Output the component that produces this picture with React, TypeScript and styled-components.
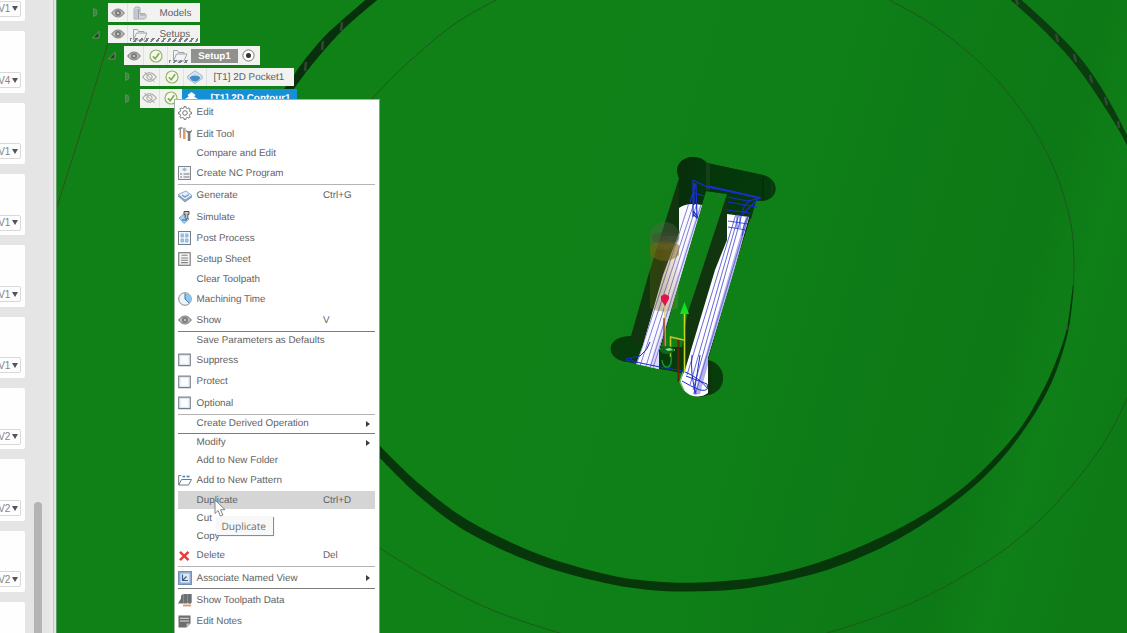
import React from 'react';
import styled, { createGlobalStyle } from 'styled-components';

const Global = createGlobalStyle`
  * { box-sizing: border-box; }
  body { margin: 0; overflow: hidden; font-family: "Liberation Sans", Arial, sans-serif; text-rendering: geometricPrecision; }
`;

const Screen = styled.div`
  display: flex;
  width: 1127px;
  height: 633px;
  overflow: hidden;
`;

/* ---------- left panel ---------- */
const Panel = styled.aside`
  position: relative;
  flex: 0 0 57px;
  height: 100%;
  overflow: hidden;
  background: linear-gradient(90deg, #e5e5e5 49px, #e8e9e8 50px, #e8e9e8 53px, #bfc5c2 53px, #c9cecb 54px, #e4e8e5 54px, #dfe6df 56px, #5c9c60 56px);
`;

const CardList = styled.div`
  display: flex;
  flex-direction: column;
  gap: 10px;
  width: 25px;
  margin-top: -40.2px;
`;

const Card = styled.div`
  display: flex;
  flex: 0 0 61.35px;
  justify-content: flex-end;
  align-items: flex-end;
  padding: 0 4px 4.5px 0;
  background: #fefefe;
  border-radius: 0 2px 2px 0;
`;

const VersionButton = styled.button`
  display: flex;
  flex: 0 0 auto;
  align-items: center;
  justify-content: flex-end;
  gap: 2px;
  width: 40px;
  height: 16px;
  padding: 0 2px 0 0;
  border: 1px solid #d9d9d9;
  border-radius: 2px;
  background: #fdfdfd;
  color: #858585;
  font: 10px "Liberation Sans", Arial, sans-serif;
  letter-spacing: -0.2px;
`;

const Caret = styled.i`
  border: 3px solid transparent;
  border-top: 5px solid #555;
  border-bottom: 0;
`;

const ScrollThumb = styled.div`
  position: absolute;
  left: 34px;
  top: 502px;
  width: 8px;
  height: 150px;
  border-radius: 4px;
  background: #b4b4b4;
`;

/* ---------- viewport ---------- */
const Viewport = styled.main`
  position: relative;
  flex: 1;
  height: 100%;
  overflow: hidden;
  background: #108117;
`;

const Canvas = styled.svg`
  display: block;
  width: 1070px;
  height: 633px;
`;

const Tree = styled.div`
  position: absolute;
  left: 0;
  top: -18.3px;
  display: flex;
  flex-direction: column;
  gap: 2.8px;
`;

const TreeRow = styled.div<{ $indent: number }>`
  display: flex;
  align-items: center;
  height: 18.7px;
  padding-left: ${p => p.$indent}px;
`;

const Expander = styled.div`
  flex: 0 0 17px;
  height: 11px;
  display: flex;
`;

const TreeItem = styled.div<{ $width: number }>`
  position: relative;
  display: flex;
  align-items: center;
  width: ${p => p.$width}px;
  height: 100%;
  background: #f2f3f1;
  color: #606060;
  font-size: 9.9px;
`;

const IconCell = styled.span<{ $w: number; $line?: boolean }>`
  display: flex;
  flex: 0 0 ${p => p.$w}px;
  height: 100%;
  align-items: center;
  justify-content: center;
  border-right: ${p => (p.$line ? '1px solid #dfe2dd' : '0')};
`;

const TreeLabel = styled.span<{ $pad?: number }>`
  padding: 1.4px 0 0 ${p => p.$pad ?? 0}px;
  white-space: nowrap;
`;

const ActiveLabel = styled.span`
  height: 14px;
  width: 47px;
  line-height: 15px;
  text-align: center;
  color: #fff;
  font-weight: bold;
  font-size: 9.7px;
  background: #8f918f;
`;

const SelectedLabel = styled.span`
  display: flex;
  align-items: center;
  flex: 1;
  height: 100%;
  gap: 12.5px;
  padding-left: 3px;
  background: #1590d6;
  color: #fff;
  font-weight: bold;
  white-space: nowrap;
`;

const Hatch = styled.i<{ $left: number; $width: number }>`
  position: absolute;
  left: ${p => p.$left}px;
  bottom: 1.5px;
  width: ${p => p.$width}px;
  height: 3.5px;
  background: repeating-linear-gradient(125deg, #7d8288 0 2px, transparent 2px 4.6px);
`;

/* ---------- context menu ---------- */
const Menu = styled.div`
  position: absolute;
  left: 117px;
  top: 99px;
  width: 206px;
  height: 560px;
  padding: 2px 4px 2px 3px;
  border: 1px solid #a3b3a3;
  border-right: 1.5px solid #8c9a8c;
  background: #fff;
`;

const MenuItem = styled.div<{ $tall?: boolean; $active?: boolean }>`
  display: grid;
  grid-template-columns: 18.6px 126.4px 1fr 9px;
  align-items: center;
  height: ${p => (p.$tall ? 21.3 : 18)}px;
  background: ${p => (p.$active ? '#d5d5d5' : 'transparent')};
  color: #636363;
  font-size: 9.85px;
  line-height: 13px;
  white-space: nowrap;
`;

const MenuIcon = styled.span`
  display: flex;
  align-items: center;
  width: 14px;
  height: 14px;
`;

const ItemText = styled.span`
  padding-top: 0.6px;
`;

const Separator = styled.div<{ $dark?: boolean }>`
  height: 1px;
  background: ${p => (p.$dark ? '#7c7c7c' : '#b4b4b4')};
`;

const SubmenuArrow = styled.i`
  border: 3.5px solid transparent;
  border-left: 4.5px solid #3c3c3c;
  border-right: 0;
  width: 0;
`;

const Tooltip = styled.div`
  position: absolute;
  left: 160px;
  top: 517px;
  width: 57px;
  height: 19px;
  padding-left: 4.5px;
  line-height: 18px;
  background: #f8f8f8;
  border: solid #8c8c8c;
  border-width: 0 1.5px 1.5px 0;
  box-shadow: 0 0 1px #ccc;
  color: #6d6d6d;
  font-family: "Open Sans", sans-serif;
  font-size: 10.2px;
  letter-spacing: -0.05px;
  white-space: nowrap;
`;

const Pointer = styled.svg`
  position: absolute;
  left: 157px;
  top: 499px;
`;

/* ---------- icons ---------- */
const Svg = ({ w = 14, h = 14, children }: { w?: number; h?: number; children: React.ReactNode }) => (
  <svg width={w} height={h} viewBox={`0 0 ${w} ${h}`} fill="none">{children}</svg>
);

const Eye = () => (
  <Svg w={14} h={10}>
    <path d="M.7 5Q7-3 13.3 5 7 13 .7 5Z" fill="#b9bab9" stroke="#868886" strokeWidth="1.2" />
    <circle cx="7" cy="5" r="3" fill="#7c7e7c" /><circle cx="7" cy="5" r="1.1" fill="#d8d8d8" />
  </Svg>
);
const EyeOff = () => (
  <Svg w={15} h={12}>
    <path d="M.7 6Q7.5-2.4 14.3 6 7.5 14.4.7 6Z" stroke="#a3a5a3" strokeWidth="1.1" />
    <circle cx="7.5" cy="6" r="2.7" stroke="#a3a5a3" /><path d="M2.5 1l10 10" stroke="#a3a5a3" />
  </Svg>
);
const Check = () => (
  <Svg w={14} h={14}>
    <circle cx="7" cy="7" r="6" stroke="#94b568" strokeWidth="1.2" fill="#f4f8ee" />
    <path d="M3.9 7.3l2.3 2.5 4-5.6" stroke="#7fa84b" strokeWidth="1.5" />
  </Svg>
);
const Boxes = () => (
  <Svg w={14} h={14}>
    <path d="M1 3L2.5 1H6L7 2V7.5H12L13 8.5V11.5L11.5 13H1Z" fill="#d4d8de" stroke="#a0a5ab" strokeWidth=".9" />
    <path d="M5.5 3V12.5H1.5V3Z" fill="#c3c8d0" /><path d="M5.5 3V12.5M7 9H12" stroke="#8e9399" strokeWidth=".8" />
  </Svg>
);
const Folder = () => (
  <Svg w={16} h={13}>
    <path d="M1.5 12V1.5h4l1 2H12V5M1.5 12L4.5 5H15l-3 7Z" stroke="#a2a5a8" fill="#f1f3f4" />
  </Svg>
);
const Pocket = () => (
  <Svg w={16} h={14}>
    <path d="M8 .7L15.2 6v2.5L8 13.5.8 8.5V6Z" fill="#d5e5f1" stroke="#91a6b5" strokeWidth=".8" />
    <path d="M2.5 7.5Q8 3 13.5 7.5 11.5 11.5 8 11.5T2.5 7.5Z" fill="#3e8fca" /><path d="M5 5.5Q8 2.500 11 5.500Z" fill="#c6dcea" />
  </Svg>
);
const Contour = () => (
  <Svg w={13} h={14}>
    <path d="M6.5 1l4 3-1.3 1.5L13 8l-6.5 5L0 8l3.8-2.5L2.5 4Z" fill="#fff" />
  </Svg>
);

const Gear = () => (
  <Svg>
    <path
      d="M12 5.9L13.5 6.2V7.8L12 8.1 11.4 9.7 12.2 11 11 12.2 9.7 11.4 8.1 12 7.8 13.5H6.2L5.9 12 4.3 11.4 3 12.2 1.8 11 2.6 9.7 2 8.1.5 7.8V6.2L2 5.9 2.6 4.3 1.8 3 3 1.8 4.3 2.6 5.9 2 6.2.5H7.8L8.1 2 9.7 2.6 11 1.8 12.2 3 11.4 4.3Z"
      stroke="#777" strokeWidth="1" strokeLinejoin="round"
    />
    <circle cx="7" cy="7" r="2.3" stroke="#777" strokeWidth="1" />
  </Svg>
);
const Tools = () => (
  <Svg>
    <path d="M0 2.5L2 1h2.5M2.3 1.5v6" stroke="#888" strokeWidth="1.3" /><path d="M2.3 6v5" stroke="#e08070" strokeWidth="1.4" />
    <path d="M5 5h2.6v7H5Z" fill="#dfa35e" /><path d="M5 .8h2.6v4.2H5Z" fill="#a9a9a9" />
    <path d="M8 2.5q0 3 1.8 3.5V14h2.6V6Q14 5.5 14 2.5L12.5 4h-3Z" fill="#7a7a7a" />
  </Svg>
);
const NcProgram = () => (
  <Svg>
    <rect x=".5" y=".5" width="12" height="13" fill="#f1f4f8" stroke="#81858c" />
    <path d="M6.5 1.5l2.5 2-2.5 2-2.5-2Z" fill="#9abbe0" /><path d="M2 8h2M5.5 8h6M2 11h2M5.5 11h6" stroke="#777" />
  </Svg>
);
const Generate = () => (
  <Svg>
    <path d="M0 7l8-4 6 5-7 5Z" fill="#8fa9c9" stroke="#75899f" strokeWidth=".7" />
    <path d="M0 5.5L8 2l6 4.5-7 4.5Z" fill="#e6eff8" stroke="#7d99b8" strokeWidth=".8" />
    <path d="M4 6l3 2 4-2.5" stroke="#6796c8" strokeWidth="1.2" />
  </Svg>
);
const Simulate = () => (
  <Svg>
    <path d="M1 8l5-4 5 5-5 4.5Z" fill="#a9d0f3" stroke="#6796bd" strokeWidth=".8" />
    <path d="M6 1.5h5v3H9.8v3L8.5 9.5 7.2 7.5v-3H6Z" fill="#c4c4c4" stroke="#4e5257" /><path d="M4 10h5" stroke="#3c83c0" strokeWidth="1.4" />
  </Svg>
);
const PostProcess = () => (
  <Svg>
    <rect x=".5" y=".5" width="12" height="13" fill="#f0f5fa" stroke="#777d84" />
    <path d="M3 3h2.5v3H3ZM7.5 3H10v3H7.5ZM3 8h2.5v3H3ZM7.5 8H10v3H7.5Z" fill="#9fc8ee" stroke="#7fb2e0" strokeWidth=".8" />
  </Svg>
);
const SetupSheet = () => (
  <Svg>
    <rect x=".7" y=".7" width="11.5" height="12.6" fill="#f3f3f3" stroke="#808080" strokeWidth="1.2" />
    <path d="M3.5 3.3h6M3 6h7M3 8.3h7M3 10.6h7" stroke="#848484" strokeWidth="1.1" />
  </Svg>
);
const Clock = () => (
  <Svg>
    <circle cx="7" cy="7" r="6.3" fill="#eef3f7" stroke="#868b90" /><path d="M7 1a6 6 0 0 1 4.2 10.2L7 7Z" fill="#8bc5f0" />
    <path d="M7 1.5V7l4 4" stroke="#4a7598" />
  </Svg>
);
const CheckBox = () => (
  <Svg>
    <rect x=".8" y="1.2" width="11.4" height="11.4" fill="#fbfcfd" stroke="#76808d" strokeWidth="1.3" /><rect x="2" y="2.4" width="9" height="9" stroke="#dfe5ec" />
  </Svg>
);
const Pattern = () => (
  <Svg>
    <path d="M.7 12V2.500h2.500M.7 12L3.500 6.500h10L10.500 12Z" stroke="#717b85" /><path d="M4.500 3.500h2.500M8.500 3.500h3" stroke="#417eb8" strokeWidth="1.600" />
  </Svg>
);
const Cross = () => (
  <Svg><path d="M2 2.8l8.500 8.400M10.500 2.800L2 11.200" stroke="#ea3a3c" strokeWidth="2.500" /></Svg>
);
const NamedView = () => (
  <Svg>
    <rect x=".5" y=".5" width="13" height="13" fill="#8eacd0" stroke="#7291b8" /><rect x="2.5" y="2.5" width="9" height="9" fill="#dfe9f4" />
    <path d="M4.5 3.5v6H10M4.5 9.5l4-4" stroke="#405f84" strokeWidth="1.2" />
  </Svg>
);
const ToolpathData = () => (
  <Svg>
    <path d="M0 10.500l3-5v5ZM3 2.500l2.300-1.500v9.500H3ZM5.500 1h4v9.500h-4ZM9.700 1h4v8.500L12 11 9.700 10Z" fill="#6d7073" /><path d="M5 12.500h8" stroke="#d99a68" strokeWidth="1.800" />
  </Svg>
);
const Notes = () => (
  <Svg>
    <path d="M.5 1.5h12v8l-4 4h-8Z" fill="#6b6d6f" /><path d="M2 4.3h9M2 7h9" stroke="#e4e4e4" strokeWidth="1.1" /><path d="M8.5 13.5v-4h4Z" fill="#b9bbbd" />
  </Svg>
);

type Entry =
  | { sep: 'light' | 'dark' }
  | { label: string; icon?: () => React.ReactElement; keys?: string; sub?: boolean; active?: boolean };

const entries: Entry[] = [
  { label: 'Edit', icon: Gear },
  { label: 'Edit Tool', icon: Tools },
  { label: 'Compare and Edit' },
  { label: 'Create NC Program', icon: NcProgram },
  { sep: 'light' },
  { label: 'Generate', icon: Generate, keys: 'Ctrl+G' },
  { label: 'Simulate', icon: Simulate },
  { label: 'Post Process', icon: PostProcess },
  { label: 'Setup Sheet', icon: SetupSheet },
  { label: 'Clear Toolpath' },
  { label: 'Machining Time', icon: Clock },
  { label: 'Show', icon: Eye, keys: 'V' },
  { sep: 'dark' },
  { label: 'Save Parameters as Defaults' },
  { label: 'Suppress', icon: CheckBox },
  { label: 'Protect', icon: CheckBox },
  { label: 'Optional', icon: CheckBox },
  { sep: 'light' },
  { label: 'Create Derived Operation', sub: true },
  { sep: 'dark' },
  { label: 'Modify', sub: true },
  { label: 'Add to New Folder' },
  { label: 'Add to New Pattern', icon: Pattern },
  { label: 'Duplicate', keys: 'Ctrl+D', active: true },
  { label: 'Cut' },
  { label: 'Copy' },
  { label: 'Delete', icon: Cross, keys: 'Del' },
  { sep: 'light' },
  { label: 'Associate Named View', icon: NamedView, sub: true },
  { sep: 'dark' },
  { label: 'Show Toolpath Data', icon: ToolpathData },
  { label: 'Edit Notes', icon: Notes },
];

/* ---------- 3D scene ---------- */
type Pt = [number, number];

// Catmull-Rom spline through the points, as cubic segments.
const curve = (p: Pt[], start = 'M') => {
  let d = `${start}${p[0][0]} ${p[0][1]}`;
  for (let i = 0; i < p.length - 1; i++) {
    const a = p[i - 1] ?? p[i], b = p[i], c = p[i + 1], e = p[i + 2] ?? c;
    d += `C${b[0] + (c[0] - a[0]) / 6} ${b[1] + (c[1] - a[1]) / 6} ${c[0] - (e[0] - b[0]) / 6} ${c[1] - (e[1] - b[1]) / 6} ${c[0]} ${c[1]}`;
  }
  return d;
};
const band = (outer: Pt[], inner: Pt[]) => curve(outer) + curve([...inner].reverse(), 'L') + 'Z';

const grooveBottom = band(
  [[1073.5, 285], [1072.5, 300], [1068.5, 330], [1059.5, 362], [1048, 390], [1030, 421], [1004, 456], [973, 487], [933, 517.5], [887, 545], [833, 568], [780, 582], [735, 589.5], [690, 591.5], [650, 590], [603, 582.5], [537, 564], [470, 533.5], [420, 497], [372, 450]],
  [[1073, 285], [1071, 300], [1066.5, 330], [1056.5, 360], [1043, 390], [1019, 430], [984, 469], [950, 497.5], [900, 528], [833, 557.5], [767, 576], [700, 582.5], [650, 581], [603, 573.5], [537, 553.5], [470, 521.5], [420, 484.5], [372, 438]],
);
const grooveLeft = band(
  [[370, -4], [340, 22], [323, 38], [303, 62], [292, 78], [282, 92]],
  [[382, -4], [348, 25], [327, 47], [307, 71], [296, 86], [288, 98]],
);
const grooveRight = band(
  [[1017, -4], [1050, 26], [1077, 54], [1097, 81], [1113, 108], [1130, 141]],
  [[1006, -4], [1033, 20], [1060, 47], [1080, 71], [1100, 100], [1117, 127], [1130, 151]],
);
const thinInner = curve([[362, 111], [372, 99], [399, 71], [440, 35], [467, 16], [500, -2]]);
const thinRight = curve([[886, -2], [933, 25], [977, 60], [1008, 93], [1033, 128], [1053, 166], [1067, 207], [1073, 240], [1073.8, 277], [1072, 300]]);
const thinOuterLeft = curve([[372, 543], [420, 573], [470, 600], [513, 618], [566, 635]]);
const thinOuterRight = curve([[824, 634], [877, 617], [933, 593], [983, 564], [1017, 540], [1050, 510], [1083, 472], [1107, 438], [1128, 397]]);

const Scene = () => (
  <Canvas viewBox="57 0 1070 633">
    <defs>
      <linearGradient id="ground" gradientUnits="userSpaceOnUse" x1="540" y1="250" x2="1127" y2="420">
        <stop offset="0" stopColor="#108117" /><stop offset=".35" stopColor="#0f8018" /><stop offset=".55" stopColor="#0d7b17" /><stop offset=".78" stopColor="#0d7916" /><stop offset=".87" stopColor="#0f7f18" /><stop offset="1" stopColor="#0d7a16" />
      </linearGradient>
      <linearGradient id="capShade" x1="0" x2="1"><stop offset="0" stopColor="#082d0a" /><stop offset=".3" stopColor="#04360a" /><stop offset="1" stopColor="#053a0c" /></linearGradient>
      <linearGradient id="tool" x1="0" x2="1"><stop offset="0" stopColor="#5f6a10" stopOpacity=".55" /><stop offset=".4" stopColor="#674a10" stopOpacity=".65" /><stop offset="1" stopColor="#c7a060" stopOpacity=".3" /></linearGradient>
      <clipPath id="leftFloor"><path d="M679 208Q687 202 702 205L682 272 659 350V369L636 364 643 345 663 275 679 233Z" /></clipPath>
      <clipPath id="rightFloor"><path d="M727 214L749 217 734 270 708 357V393Q700 399 690 395 680 390 681 379L685 370 715 270 727 240Z" /></clipPath>
    </defs>
    <rect x="57" width="1070" height="633" fill="url(#ground)" />

    <g fill="none" stroke="#23541f" strokeWidth="1">
      <path d="M108 43L90 103 56 210" stroke="#315021" />
      <path d={thinInner} /><path d={thinRight} />
      <path d={thinOuterLeft} stroke="#1c5a1c" /><path d={thinOuterRight} stroke="#1c5a1c" />
    </g>
    <g fill="#08360c">
      <path d={grooveBottom} fill="#07360b" /><path d={grooveLeft} fill="#09300c" /><path d={grooveRight} fill="#0a3c10" />
    </g>
    <g stroke="#40503c" strokeWidth="2.5" opacity=".75">
      <path d="M342 22l-1 9M323 41l-1 9M306 62l-1 9M1016-1l2 6M1056 34l2 8M1074 54l2 8M1090 75l2 8M1105 97l2 8M1118 121l1 7M1067 325v5" />
    </g>

    {/* pocket walls */}
    <path fillRule="evenodd" fill="#11350f" d="M679 178C674 166 682 157 693 157Q702 157 707 163L763 175C780 179 780 200 761 201H756L733 272 708 360C728 365 728 392 708 395Q695 401 685 390L681 373 628 362C605 360 605 337 628 337L631 336 649 273ZM706 191L682 272 661 347H682L687 315 702 270 727 194Z" />
    <path fill="url(#capShade)" d="M679 178C673 166 682 157 693 157Q702 157 707 163L763 175C780 179 780 200 761 201H756L751 219 727 214V194L706 191 701 207 679 208Z" />
    <path d="M707 163v27M709 164v26" stroke="#36533a" strokeWidth=".9" opacity=".8" /><path d="M763 176v24" stroke="#062608" /><path d="M772 182v14" stroke="#254c26" opacity=".6" />
    <path fill="#073b0b" d="M631 336C604 336 605 360 628 362L637 363 643 345 630 341ZM661 347h21l2 25-25-3Z" />
    <path fill="#073c0b" d="M708 360C728 365 728 390 708 395Z" /><path d="M710 361v33" stroke="#14300f" strokeWidth="3" />

    {/* pocket floor with tool passes */}
    <g clipPath="url(#leftFloor)">
      <rect x="630" y="200" width="80" height="172" fill="#fbfbff" />
      <path d="M699 206L648 370H660L706 206Z" fill="#dcdcfb" />
      <path d="M695 200L640 366M698 200L646 366M690 200L636 366M701 205L650 368M704 207L653 368" stroke="#7f7ddb" strokeWidth="1" />
    </g>
    <g clipPath="url(#rightFloor)">
      <rect x="680" y="210" width="72" height="190" fill="#fff" />
      <path d="M746 216L694 395 700 394 712 350 751 216Z" fill="#b4b3f0" />
      <path d="M739 214L690 385M742 214L693 390M736 214L687 375M748 217L696 392" stroke="#6a69d9" strokeWidth="1" fill="none" />
    </g>
    <g fill="none" stroke="#1b2ec8" strokeWidth="1">
      <path d="M693 180L707 187 761 198 748 201 727 197M693 180V217M694 183V205M694 193L704 196M690 202L696 183 697 218 693 214M693 211L698 217M728 202L757 207M727 210L750 213M755 199Q741 203 743 216M759 198L744 213" strokeWidth="1.2" />
      <path d="M707 186L760 198" strokeWidth="1.8" />
      <path d="M728 221L748 224M728 227L746 230M742 236Q744 220 750 214M737 214v14M740 214v14" strokeWidth=".8" />
      <path d="M626 359L640 356Q648 350 650 342M626 360L660 367 683 371Q700 378 708 389M630 358L636 364M682 381Q690 386 700 390 710 392 707 384L686 376M692 355Q690 374 696 394M700 355L694 394" />
    </g>

    {/* translucent cutter */}
    <path d="M650 236h29l-1 72q-14 7-28 0Z" fill="url(#tool)" opacity=".55" />
    <ellipse cx="664.5" cy="236" rx="15" ry="14" fill="#55634c" opacity=".4" />
    <path d="M650 245q14-8 29 0v10q-14 12-29 0Z" fill="#7b6616" opacity=".5" />
    <ellipse cx="665" cy="238" rx="13.5" ry="6" fill="#3e4938" opacity=".35" />

    {/* coordinate triad */}
    <g fill="none" strokeWidth="1.3">
      <path d="M665 306V347" stroke="#d6cf55" /><path d="M684.5 313V372" stroke="#c6d81d" strokeWidth="1.6" /><path d="M684 340L670.5 337V357" stroke="#c5c624" strokeWidth="1.5" />
      <path d="M678.5 340V382" stroke="#67200c" strokeWidth="2" /><path d="M664 318V347" stroke="#9c2b20" />
      <path d="M662 360q1 8 6 7 4-1 3-11" stroke="#1a9c3d" /><path d="M660 349l15 1M683 372l-3 10 4 8" stroke="#79bf6a" />
    </g>
    <path d="M661 296l4-2 4 2v3l-4 7-4-6Z" fill="#e1124d" /><path d="M684.5 302l4.500 12h-9Z" fill="#13df25" />
    <ellipse cx="667" cy="350" rx="7" ry="4" fill="#0d6919" /><path d="M665 349l5-1 3 2-5 1Z" fill="#8be18a" />
  </Canvas>
);

const Open = () => <Svg w={11} h={11}><path d="M8 2.5V9H1.5Z" fill="#234522" stroke="#7aa07a" strokeWidth=".8" /></Svg>;
const Closed = () => <Svg w={11} h={11}><path d="M2.500 1.500v8L5.800 8V3Z" fill="#4a7f4a" stroke="#5c955d" strokeWidth=".8" /></Svg>;

const versions = ['V1', 'V4', 'V1', 'V1', 'V1', 'V1', 'V2', 'V2', 'V2', 'V2'];

export default function App() {
  return (
    <Screen>
      <Global />
      <Panel>
        <CardList>
          {versions.map((v, i) => (
            <Card key={i}><VersionButton>{v}<Caret /></VersionButton></Card>
          ))}
        </CardList>
        <ScrollThumb />
      </Panel>
      <Viewport>
        <Scene />
        <Tree>
          <TreeRow $indent={51}><TreeItem $width={88} /></TreeRow>
          <TreeRow $indent={34}>
            <Expander><Closed /></Expander>
            <TreeItem $width={92}>
              <IconCell $w={20} $line><Eye /></IconCell><IconCell $w={23}><Boxes /></IconCell><TreeLabel $pad={8.5}>Models</TreeLabel>
            </TreeItem>
          </TreeRow>
          <TreeRow $indent={34}>
            <Expander><Open /></Expander>
            <TreeItem $width={92}>
              <IconCell $w={20} $line><Eye /></IconCell><IconCell $w={23}><Folder /></IconCell><TreeLabel $pad={8.5}>Setups</TreeLabel>
              <Hatch $left={22} $width={68} />
            </TreeItem>
          </TreeRow>
          <TreeRow $indent={50}>
            <Expander><Open /></Expander>
            <TreeItem $width={136}>
              <IconCell $w={20} $line><Eye /></IconCell><IconCell $w={24} $line><Check /></IconCell><IconCell $w={23}><Folder /></IconCell>
              <ActiveLabel>Setup1</ActiveLabel>
              <IconCell $w={20}>
                <Svg w={13} h={13}><circle cx="6.5" cy="6.5" r="5.6" stroke="#777" fill="#fff" /><circle cx="6.5" cy="6.5" r="2.5" fill="#333" /></Svg>
              </IconCell>
              <Hatch $left={45} $width={20} />
            </TreeItem>
          </TreeRow>
          <TreeRow $indent={66}>
            <Expander><Closed /></Expander>
            <TreeItem $width={154}>
              <IconCell $w={20} $line><EyeOff /></IconCell><IconCell $w={24} $line><Check /></IconCell><IconCell $w={23} $line><Pocket /></IconCell>
              <TreeLabel $pad={6.5}>[T1] 2D Pocket1</TreeLabel>
            </TreeItem>
          </TreeRow>
          <TreeRow $indent={66}>
            <Expander><Closed /></Expander>
            <TreeItem $width={157}>
              <IconCell $w={20} $line><EyeOff /></IconCell><IconCell $w={22}><Check /></IconCell>
              <SelectedLabel><Contour />[T1] 2D Contour1</SelectedLabel>
            </TreeItem>
          </TreeRow>
        </Tree>
        <Menu>
          {entries.map((e, i) =>
            'sep' in e ? (
              <Separator key={i} $dark={e.sep === 'dark'} />
            ) : (
              <MenuItem key={i} $tall={!!e.icon} $active={e.active}>
                <MenuIcon>{e.icon && <e.icon />}</MenuIcon>
                <ItemText>{e.label}</ItemText>
                <ItemText>{e.keys}</ItemText>
                {e.sub ? <SubmenuArrow /> : <span />}
              </MenuItem>
            ),
          )}
        </Menu>
        <Tooltip>Duplicate</Tooltip>
        <Pointer width="12" height="19" viewBox="0 0 12 19">
          <path d="M1 1v13.500l3.100-3 2.200 5.500 2.500-1-2.300-5.300H11Z" fill="#fff" stroke="#777" strokeWidth=".9" />
        </Pointer>
      </Viewport>
    </Screen>
  );
}
